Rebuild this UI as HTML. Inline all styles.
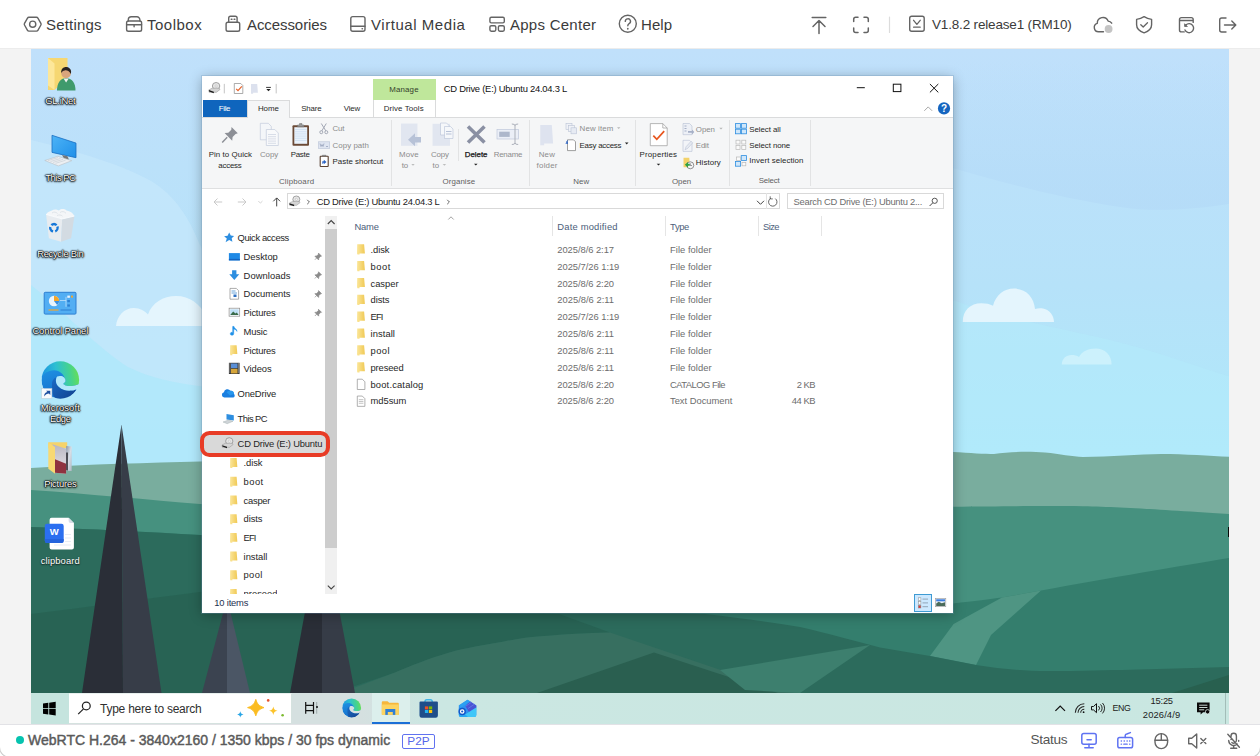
<!DOCTYPE html>
<html lang="en">
<head>
<meta charset="utf-8">
<title>Remote KVM</title>
<style>
*{box-sizing:border-box;margin:0;padding:0}
html,body{width:1260px;height:756px;overflow:hidden;background:#f3f3f3;font-family:"Liberation Sans",sans-serif;}
.abs{position:absolute}
#topbar{position:absolute;left:0;top:0;width:1260px;height:49px;background:#fff;border-bottom:1px solid #ececec;}
#topbar .t{position:absolute;top:15.5px;font-size:15px;line-height:18px;color:#3b3b3b;white-space:nowrap;}
#topbar svg{position:absolute;overflow:visible}
#botbar{position:absolute;left:0;top:724px;width:1260px;height:32px;background:#fff;border-top:1px solid #e2e2e6;}
#botbar>*{margin-top:-724px}
.bt{white-space:nowrap;line-height:18px}
.tk{white-space:nowrap;line-height:14px}
.x{position:absolute;white-space:nowrap}
.dl{position:absolute;left:-30.7px;width:120px;text-align:center;font-size:9.4px;line-height:11.6px;color:#fff;text-shadow:0 0 1.2px #000,0 0 1.2px #000,0 0 1.5px #000,0 0 2px #000,0 1px 2px rgba(0,0,0,.9);white-space:nowrap}
.dl.lt{text-shadow:0 1px 1.5px rgba(0,0,0,.75),0 0 1px rgba(0,0,0,.5)}
.sep{top:120px;width:1px;height:66px;background:#e2e3e4}
.hd{top:216px;width:1px;height:20px;background:#e5e5e5}
#desk{position:absolute;left:31px;top:49px;width:1198px;height:675px;overflow:hidden;background:#b5e2f8;}
#desk>svg.bg{position:absolute;left:0;top:0}
#taskbar{position:absolute;left:0;top:644px;width:1198px;height:31px;background:linear-gradient(90deg,#c5e4de 0,#c5e4de 40px,#d5e0e0 262px,#d5e0e0 330px,#cbe7e2 400px,#c9e7e1 100%);}
#win{position:absolute;left:171px;top:27px;width:751px;height:537px;background:#fff;box-shadow:0 0 0 1px rgba(110,150,185,.28),0 2px 12px rgba(0,0,0,.3);font-size:9px;color:#222;}
</style>
</head>
<body>
<div id="topbar">
<!--TOPBAR-->
<svg width="1260" height="49" viewBox="0 0 1260 49" style="left:0;top:0" fill="none" stroke="#646464" stroke-width="1.4" stroke-linecap="round" stroke-linejoin="round">
<!-- settings -->
<path d="M28.9 17.3 h7.6 a1.6 1.6 0 0 1 1.4 .8 l3 5.3 a1.6 1.6 0 0 1 0 1.6 l-3 5.3 a1.6 1.6 0 0 1 -1.4 .8 h-7.6 a1.6 1.6 0 0 1 -1.4 -.8 l-3 -5.3 a1.6 1.6 0 0 1 0 -1.6 l3 -5.3 a1.6 1.6 0 0 1 1.4 -.8z"/>
<circle cx="32.7" cy="24.2" r="3.1"/>
<!-- toolbox -->
<path d="M128.3 21 v-1.2 a3 3 0 0 1 3 -3 h5.6 a3 3 0 0 1 3 3 v1.200"/>
<rect x="126.600" y="21" width="15" height="10.2" rx="1.800"/>
<path d="M126.600 24.800 h15 M134.100 24.800 v2"/>
<!-- accessories usb -->
<path d="M228.700 22.300 v-4.200 a1.800 1.800 0 0 1 1.800 -1.800 h4.800 a1.800 1.800 0 0 1 1.800 1.800 v4.200"/>
<rect x="226.100" y="22.300" width="13.600" height="8.900" rx="1.800"/>
<path d="M231.300 19.300 h.6 M234.200 19.300 h.6" stroke-width="1.600"/>
<!-- virtual media -->
<rect x="350.800" y="16.600" width="14.200" height="14.600" rx="2"/>
<path d="M350.800 26.300 h14.200"/>
<path d="M362.100 28.800 h.3" stroke-width="1.500"/>
<!-- apps center -->
<rect x="489.900" y="17.300" width="14.400" height="5.600" rx="1.400"/>
<rect x="489.900" y="25.700" width="5.900" height="5.500" rx="1.400"/>
<rect x="498.400" y="25.700" width="5.900" height="5.500" rx="1.400"/>
<!-- help -->
<circle cx="627.800" cy="23.800" r="8.500"/>
<path d="M625.300 21.400 a2.600 2.600 0 1 1 3.800 2.300 c-.9 .5 -1.300 1 -1.300 2.100"/>
<path d="M627.800 28.600 v.2" stroke-width="1.700"/>
<!-- upload -->
<path d="M812.200 17.600 h13.600 M819 33.400 v-12.500 M813 26.500 l6 -6 l6 6" stroke-width="1.500"/>
<!-- fullscreen -->
<path d="M853.700 21.600 v-2.300 a2 2 0 0 1 2 -2 h2.300 M864 17.300 h2.300 a2 2 0 0 1 2 2 v2.300 M868.300 28.100 v2.300 a2 2 0 0 1 -2 2 h-2.300 M858 32.400 h-2.300 a2 2 0 0 1 -2 -2 v-2.300" stroke-width="1.500"/>
<path d="M889.500 17 v15.400" stroke="#dcdcdc" stroke-width="1.200"/>
<!-- version -->
<rect x="909.700" y="16.300" width="14.500" height="14.900" rx="2"/>
<path d="M913.600 20.300 l3.300 4 l3.300 -4 M913.600 27.200 h6.600" stroke-width="1.300"/>
<!-- cloud -->
<path d="M1103.500 31.800 h-5 a4.300 4.300 0 0 1 -1.200 -8.400 a5.600 5.600 0 0 1 10.800 -2.300 a4.500 4.500 0 0 1 3.600 2.100"/>
<circle cx="1108.600" cy="29" r="3.900" fill="#c4c4c4" stroke="none"/>
<!-- shield -->
<path d="M1144.100 16.700 c2.500 1.700 4.800 2.400 7.500 2.700 v5.400 c0 4 -3 6.500 -7.500 8 c-4.500 -1.500 -7.500 -4 -7.500 -8 v-5.400 c2.700 -.3 5 -1 7.500 -2.700z"/>
<path d="M1140.800 24.700 l2.400 2.300 l4.300 -4.300" stroke-width="1.300"/>
<!-- history -->
<path d="M1184.200 31.900 h-2.700 a2 2 0 0 1 -2 -2 v-10.300 a2 2 0 0 1 2 -2 h9.700 a2 2 0 0 1 2 2 v2.800 M1179.500 20.500 h13.700"/>
<path d="M1185.900 25 a4.500 4.500 0 1 1 -.9 5" stroke-width="1.400"/><path d="M1184.600 24.100 v2.400 h2.400z" fill="#666" stroke-width=".8"/>
<!-- exit -->
<path d="M1226 32 h-4.300 a2 2 0 0 1 -2 -2 v-10 a2 2 0 0 1 2 -2 h4.300 M1224.500 25 h11 M1231.800 21 l4 4 l-4 4"/>
</svg>
<div class="t" style="left:46px;letter-spacing:.2px">Settings</div>
<div class="t" style="left:147px;letter-spacing:.5px">Toolbox</div>
<div class="t" style="left:247px;letter-spacing:-.08px">Accessories</div>
<div class="t" style="left:371px;letter-spacing:.55px">Virtual Media</div>
<div class="t" style="left:510px;letter-spacing:.26px">Apps Center</div>
<div class="t" style="left:641px;letter-spacing:.1px">Help</div>
<div class="t" style="left:932px;font-size:13.5px;letter-spacing:-.17px">V1.8.2 release1 (RM10)</div>
<!--/TOPBAR-->
</div>
<div id="desk">
<!--BG-->
<svg class="bg" width="1198" height="676" viewBox="31 49 1198 676">
<defs>
<linearGradient id="sky" x1="0" y1="0" x2="0" y2="1">
<stop offset="0" stop-color="#c0e0fb"/><stop offset="0.55" stop-color="#b6e2f9"/><stop offset="1" stop-color="#ade9fa"/>
</linearGradient>
<linearGradient id="skyd" gradientUnits="userSpaceOnUse" x1="0" y1="60" x2="0" y2="200"><stop offset="0" stop-color="#b3d9f7" stop-opacity="0"/><stop offset="1" stop-color="#b3d9f7" stop-opacity=".6"/></linearGradient>
</defs>
<rect x="31" y="49" width="1198" height="430" fill="url(#sky)"/>
<!-- subtle sky waves -->
<path d="M31 140 C80 152 125 166 151 181 C175 195 190 220 199 243 C230 310 320 350 420 365 L953 380 L953 480 L31 480Z" fill="#c8e9fc" opacity=".62"/>
<path d="M31 285 C60 308 100 350 128 367 C150 378 175 383 199 386 C300 395 400 398 953 400 L953 480 L31 480Z" fill="#afe7fa" opacity=".85"/>
<path d="M953 49 L1229 49 L1229 204 C1190 210 1150 212 1120 207 C1060 198 1000 182 953 168Z" fill="url(#skyd)"/>
<path d="M953 300 C1000 318 1060 328 1110 340 C1160 352 1200 368 1229 376 L1229 480 L953 480Z" fill="#b4ebfb" opacity=".5"/>
<!-- clouds -->
<g fill="#e4f5fd">
<path d="M116 326 C117 316 124 308 134 308 C140 308 145 311 148 314.400 C152 303 163 296 176 296 C190 296 200 304 206 316 L212 326Z"/>
<path d="M962.800 322.100 C962.500 311 970 303.200 981.300 303.200 C986 303.200 990 304 993 305.700 C996 295 1004 288.600 1014 288.600 C1026 288.600 1034 297 1035 309 C1038 308 1041 308 1043 308.600 C1050 310 1054 316 1054 322.100Z"/>
<path d="M1061.800 364.600 C1062 358.500 1066 355 1071.500 355 C1074.500 355 1077 355.600 1079 357 C1082 351.500 1088 348.600 1095.600 348.600 C1105 348.600 1111.600 355 1111.600 364.600Z" fill="#ccf1fc"/>
</g>
<!-- hills -->
<path d="M31 468 C90 464 150 463 200 461.500 C350 456 500 452 650 451 C760 451 860 452 953 452 C970 453 985 454 994 454 C1010 451.500 1030 451.300 1045 452.500 C1060 454 1072 456.500 1083 457 C1110 457 1140 454 1161 454 C1185 454 1210 456 1229 456.700 L1229 725 L31 725Z" fill="#79ad9e"/>
<path d="M31 490 C90 494 150 500 200 504 C400 514 750 512 953 506.700 C1010 506 1050 506 1083 506.200 C1120 507 1150 509 1229 514 L1229 725 L31 725Z" fill="#46917f"/>
<path d="M31 527 C90 529 150 532 200 535 C350 548 500 585 620 606 L870 613 C900 609 930 606 953 603.500 C975 601 990 599 1002 597.500 L1041 590.500 C1110 578 1180 566 1229 558 L1229 725 L31 725Z" fill="#347e6d"/>
<path d="M1002 597.500 L1041 590.500 L991 635 L976 665 L930 656 L953.600 624Z" fill="#4f9583"/>
<path d="M31 527 C90 529 150 532 200 535 C250 540 300 545 345 552 L345 640 L31 640Z" fill="#2c6b5c"/>
<path d="M31 614 C90 607 150 598 200 592 C260 588 300 592 340 600 L705 614 C740 618 770 622 800 627 C830 634 855 641 880 647.500 L930 656 L976 665 C1000 669 1025 671 1047 671 C1080 671 1110 670 1130 669.700 L1229 667 L1229 725 L31 725Z" fill="#2c6b5c"/>
<path d="M31 614 C90 607 150 598 200 592 C260 588 300 592 340 600 L559 614 L610 632.400 C585 633 565 634 544 636 C530 637 515 639 504 641.500 C485 645 465 648 449.500 652.400 C430 658 410 666 395 672.500 L340 691 L31 725Z" fill="#286354"/>
<path d="M340 693 L395 672.500 C410 666 430 658 449.500 652.400 C465 648 485 645 504 641.500 C515 639 530 637 544 636 C565 634 585 633 610 632.400 L723 670.700 L800 693Z" fill="#376f60"/>
<path d="M537 693 L654 652.400 L778 693Z" fill="#2a5f50"/>
<path d="M720 670 L870 645 L800 693 L745 690Z" fill="#3d7f6e"/>
<path d="M1180 690.500 L1229 675 L1229 693 L1172 693Z" fill="#28604f"/>
<!-- trees -->
<path d="M227 598 L202 693 L227 693Z" fill="#3b4350"/><path d="M227 598 L250 693 L227 693Z" fill="#4b5665"/>
<path d="M322 520 L290 693 L322 693Z" fill="#2a2e37"/><path d="M322 520 L355 693 L322 693Z" fill="#363c47"/>
<path d="M121.500 424.500 L82 693 L123 693Z" fill="#2a2e37"/><path d="M121.500 424.500 L161.500 693 L123 693Z" fill="#373d48"/>
</svg>
<!--/BG-->
<!--ICONS-->
<div class="abs" style="left:1196.900px;top:478.100px;width:1.100px;height:9.700px;background:#050807"></div>
<svg class="abs" width="1198" height="675" viewBox="31 49 1198 675" style="left:0;top:0">
<defs>
<linearGradient id="fy" x1="0" y1="0" x2="1" y2="0"><stop offset="0" stop-color="#fde89c"/><stop offset="1" stop-color="#f2cd5e"/></linearGradient>
<linearGradient id="mon" x1="0" y1="0" x2="1" y2="1"><stop offset="0" stop-color="#4db4f7"/><stop offset="1" stop-color="#1f8fe8"/></linearGradient>
<radialGradient id="bin" cx=".5" cy=".4" r=".7"><stop offset="0" stop-color="#ffffff"/><stop offset="1" stop-color="#d6dde3"/></radialGradient>
</defs>
<!-- GL.iNet user folder -->
<path d="M48 58 h19.500 v20 l-13 12 h-6.500z" fill="#f6d772"/>
<path d="M48 58 l6.500 5.500 v26.500 l-6.500 -4.500z" fill="#fde79a"/>
<path d="M57 90.500 c0 -8 3.500 -12 9 -12.500 c6 .5 9.500 4.500 9.500 12.500z" fill="#3f9a6c"/>
<path d="M63.500 78.500 l2.600 4 l2.600 -4z" fill="#f2f2f2"/>
<circle cx="66.100" cy="73.400" r="4.800" fill="#d9a57c"/>
<path d="M61.200 73 c-.5 -5.500 5 -7.500 8.500 -4.500 c1.800 1.500 1.600 4 1 5.500 c-.8 -2.500 -3.500 -4 -6 -3.600 c-1.500 .2 -2.800 1.200 -3.500 2.600z" fill="#2a2320"/>
<!-- This PC -->
<path d="M52 135.300 l24 7.800 v14.600 l-24 -5.300z" fill="url(#mon)" stroke="#1b6fc2" stroke-width=".8"/>
<path d="M62 155 l2 3.500 l5 1.200 l-1.500 -3.400z" fill="#777"/>
<path d="M44.800 160.500 l13 -4.200 l14 4.400 l-13.500 5.200z" fill="#eceff2" stroke="#b9c0c6" stroke-width=".6"/>
<path d="M48 160.600 l10 -3 M50.500 161.500 l10 -3 M53 162.400 l10 -3 M55.500 163.300 l10 -3" stroke="#c5cbd1" stroke-width=".6"/>
<!-- Recycle Bin -->
<path d="M46.100 214.400 L62.200 218.900 L61.100 241.700 L48.900 238.300Z" fill="#e8ecf0"/>
<path d="M62.200 218.900 L74.400 216.100 L71.100 238.300 L61.100 241.700Z" fill="#d3dbe2"/>
<path d="M46.100 214.400 C47 212 49.500 211.500 52 210.500 C54 208.800 57 209.500 59 210.500 C61 208.500 64.500 208.800 66.500 210.500 C70 211 73 213 74.400 216.100 L62.200 218.900Z" fill="#f4f6f8"/>
<path d="M52 213 c2 -1.500 4 -1 5.500 .5 M60 212.500 c2 -1.600 4.500 -1 6 .8 M57 215.500 c2 -1 4 -.6 5.500 .6" fill="none" stroke="#d5dce2" stroke-width=".7"/>
<path d="M46.100 214.400 L62.200 218.900 L74.400 216.100" fill="none" stroke="#fbfcfd" stroke-width=".9"/>
<circle cx="53.900" cy="227.800" r="3.700" fill="none" stroke="#1878d8" stroke-width="2.400" stroke-dasharray="5.600 2.150" transform="rotate(-20 53.900 227.800)"/>
<!-- Control Panel -->
<rect x="44.200" y="292.300" width="31.800" height="21.800" rx="1" fill="#52aef3" stroke="#2c7fd2" stroke-width="1"/>
<circle cx="54" cy="301" r="5.200" fill="#eaf4fd"/><path d="M54 301 v-5.200 a5.200 5.200 0 0 1 5.200 5.200z" fill="#f4a62a"/><path d="M54 301 h5.200 a5.200 5.200 0 0 1 -2 4z" fill="#3b8fe0"/>
<path d="M48.500 310 h10" stroke="#f4a62a" stroke-width="1.200"/><path d="M60.500 310 h11" stroke="#2c7fd2" stroke-width="1"/>
<path d="M60 300.500 h6 M66 296.800 v10" stroke="#bfe0fa" stroke-width=".8"/>
<rect x="67.300" y="295.600" width="2.600" height="2.200" fill="#eaf4fd"/><rect x="67.300" y="300" width="2.600" height="2.200" fill="#2c7fd2"/><rect x="67.300" y="304.400" width="2.600" height="2.200" fill="#2c7fd2"/><rect x="71" y="295.600" width="2" height="2" fill="#f4a62a"/>
<!-- Edge big -->
<defs>
<linearGradient id="eb1" x1="0" y1="0" x2=".3" y2="1"><stop offset="0" stop-color="#2199e8"/><stop offset="1" stop-color="#1670cc"/></linearGradient>
<linearGradient id="eb2" x1="0" y1=".5" x2="1" y2=".4"><stop offset="0" stop-color="#1b90e2"/><stop offset=".4" stop-color="#2dbfd2"/><stop offset=".75" stop-color="#46d38c"/><stop offset="1" stop-color="#6ee04c"/></linearGradient>
<linearGradient id="eb3" x1="0" y1="0" x2="1" y2="1"><stop offset="0" stop-color="#1a6cc6"/><stop offset="1" stop-color="#123f8c"/></linearGradient>
<mask id="edgemask" maskUnits="userSpaceOnUse" x="40" y="360" width="41" height="41"><circle cx="60.300" cy="380" r="18.800" fill="#fff"/><path d="M57.200 376.600 C58.500 375.900 60 375.800 61.300 376.100 C63 376.500 64.200 377.300 64.800 378.400 C65.300 379 65.600 380 65.400 381.300 C65.400 381.800 64.500 382.700 63.300 383.600 C63.300 384.200 64 384.800 65.400 385.400 C68 386.300 73 386.500 76.400 385.100 L80 384 L80 388 L75.900 389.400 C74 390.300 72.500 390.600 70.600 390.600 C68.500 390.700 66 390.500 64.200 390 C62 389.400 60.200 388.300 59 387.100 C57.600 385.800 56.500 384.200 56.100 382.500 C55.800 381.300 55.800 380.100 56.100 379 C56.300 378 56.700 377.200 57.200 376.600Z" fill="#000"/></mask>
<g id="edgelogo" mask="url(#edgemask)">
<circle cx="60.300" cy="380" r="18.800" fill="url(#eb1)"/>
<path d="M55.500 377.200 C53 379 51.800 381.500 52 384.200 C52 387 52 390 52.600 393 C53.200 395.500 54.200 397.300 55.500 398.200 L60 400 L67.100 398.500 C70 397 72.500 395.300 74.100 393 C75.200 391.500 75.800 390.300 75.900 389.400 C74 390.300 72.500 390.600 70.600 390.600 C68.500 390.700 66 390.500 64.200 390 C62 389.400 60.200 388.300 59 387.100 C57.600 385.800 56.500 384.200 56.100 382.500 C55.800 381.300 55.800 380.100 56.100 379Z" fill="url(#eb3)"/>
<path d="M41 378 L41 360 L80 360 L80 384 L76.400 385.100 C73 386.500 68 386.300 65.400 385.400 C64 384.800 63.300 384.200 63.300 383.600 C64.500 382.700 65.400 381.800 65.400 381.300 C65.600 380 65.300 379 64.800 378.400 C64 375 60 370.300 54 370.300 C48 370.300 43.500 374 41 378Z" fill="url(#eb2)"/>
</g>
</defs>
<use href="#edgelogo"/>
<rect x="41.700" y="388.500" width="10.200" height="9.800" fill="#f7fafc" stroke="#c2ccd4" stroke-width=".5"/><path d="M44.200 396.400 c-.2 -2.400 1 -4 3.200 -4.400 l-1.300 -1.300 h4.200 v4.200 l-1.300 -1.300 c-2 .2 -3.600 1 -4.800 2.800z" fill="#1b4fa0"/>
<!-- Pictures folder -->
<defs><linearGradient id="ph1" x1="0" y1="0" x2="0" y2="1"><stop offset="0" stop-color="#b9b7c2"/><stop offset="1" stop-color="#e9e6ea"/></linearGradient>
<linearGradient id="ph2" x1="0" y1="0" x2="1" y2="1"><stop offset="0" stop-color="#8d97a6"/><stop offset=".5" stop-color="#d9dee6"/><stop offset="1" stop-color="#aeb6c2"/></linearGradient></defs>
<path d="M48.300 442.200 h18.900 v6 h-18.900z" fill="#f5d36b"/>
<path d="M66.100 446 L71.700 446.600 L71.700 471 L66.100 470.400Z" fill="url(#ph2)"/>
<path d="M66.100 452.500 h1.700 v18 l-1.700 -.2z" fill="#2b2b32"/>
<path d="M52.500 444.300 L66.100 448.800 L66.100 473.800 L55 472.700Z" fill="url(#ph1)"/>
<path d="M55 459.300 L66.100 463.800 L66.100 473.800 L55 472.700Z" fill="#8f3340"/>
<path d="M48.300 442.400 L55 447.100 L55 473.800 L48.300 468.800Z" fill="#f8d973"/>
<!-- Word doc -->
<path d="M51.600 517.800 h17 l5.300 5.300 v24.400 a2 2 0 0 1 -2 2 h-20.300 a2 2 0 0 1 -2 -2 v-27.700 a2 2 0 0 1 2 -2z" fill="#fff"/>
<path d="M68.600 517.800 v3.300 a2 2 0 0 0 2 2 h3.300z" fill="#d7dde6"/>
<path d="M65 534.500 h6 M65 538 h6 M65 541.500 h6 M54 545 h17" stroke="#e6ecf5" stroke-width="1.200"/>
<rect x="44.800" y="523.800" width="18.900" height="19.100" rx="2.200" fill="#2b6ff0"/><path d="M44.800 539 h18.900 v1.700 a2.200 2.200 0 0 1 -2.200 2.200 h-14.500 a2.200 2.200 0 0 1 -2.200 -2.200z" fill="#2463dc"/>
<text x="54.250" y="535.300" font-family="Liberation Sans, sans-serif" font-size="9.500" font-weight="bold" fill="#fff" text-anchor="middle">W</text>
</svg>
<div class="dl" id="d0" style="top:45.64px;letter-spacing:-0.23px">GL.iNet</div>
<div class="dl" id="d1" style="top:122.54px;letter-spacing:-0.47px">This PC</div>
<div class="dl" id="d2" style="top:198.94px;letter-spacing:-0.29px">Recycle Bin</div>
<div class="dl" id="d3" style="top:275.64px;letter-spacing:-0.08px">Control Panel</div>
<div class="dl" id="d4" style="top:352.64px"><span style="letter-spacing:.14px">Microsoft</span><br><span style="letter-spacing:-.33px">Edge</span></div>
<div class="dl" id="d5" style="top:428.64px;letter-spacing:-0.19px">Pictures</div>
<div class="dl lt" id="d6" style="top:505.94px;letter-spacing:0.10px">clipboard</div>
<!--/ICONS-->
<div id="win">
<!--WIN-->
<div class="abs" style="left:-202px;top:-76px;width:0;height:0">
<!-- title/manage -->
<div class="abs" style="left:373px;top:79px;width:62.800px;height:21px;background:#bfe79b"></div>
<!-- tabs -->
<div class="abs" style="left:203px;top:100px;width:44px;height:17.400px;background:#0f65bd"></div>
<div class="abs" style="left:247.400px;top:100.300px;width:42.400px;height:18px;background:#f5f6f7;border:1px solid #dadbdc;border-bottom:none"></div>
<div class="abs" style="left:373px;top:99.800px;width:62.800px;height:17.600px;border-left:1px solid #dadbdc;border-right:1px solid #dadbdc;background:#fff"></div>
<!-- ribbon -->
<div class="abs" style="left:202px;top:117.400px;width:751px;height:71.400px;background:#f5f6f7;border-top:1px solid #dadbdc;border-bottom:1px solid #dfe0e1"></div>
<div class="abs" style="left:248.400px;top:117px;width:40.400px;height:2px;background:#f5f6f7"></div>
<div class="abs sep" style="left:390.600px"></div><div class="abs sep" style="left:528.800px"></div><div class="abs sep" style="left:635.300px"></div><div class="abs sep" style="left:729.400px"></div><div class="abs sep" style="left:810.200px"></div>
<div class="abs" style="left:458.300px;top:129px;width:1px;height:32px;background:#e2e3e4"></div>
<!-- address bar -->
<div class="abs" style="left:286.700px;top:193.100px;width:493.300px;height:16.400px;border:1px solid #d9d9d9;background:#fff"></div>
<div class="abs" style="left:766.300px;top:193.100px;width:1px;height:16.400px;background:#e3e3e3"></div>
<div class="abs" style="left:786.800px;top:193.100px;width:157.600px;height:16.400px;border:1px solid #d9d9d9;background:#fff"></div>
<!-- nav scrollbar -->
<div class="abs" style="left:325.200px;top:216px;width:12px;height:378px;background:#f0f0f0"></div>
<div class="abs" style="left:325.200px;top:229.300px;width:12px;height:318.600px;background:#cdcdcd"></div>
<!-- header dividers -->
<div class="abs hd" style="left:552px"></div><div class="abs hd" style="left:665.400px"></div><div class="abs hd" style="left:758px"></div><div class="abs hd" style="left:820.800px"></div>
<!-- nav selection -->
<div class="abs" style="left:203px;top:434.600px;width:122px;height:18.700px;background:#d9d9d9"></div>
<div class="abs" style="left:199.800px;top:430.900px;width:130.300px;height:25.800px;border:4.400px solid #e83c26;border-radius:9.500px"></div>
<!-- status bar view buttons -->
<div class="abs" style="left:914.200px;top:594.200px;width:17.600px;height:17.400px;background:#cce8ff;border:1.200px solid #3f9bd3"></div>
<!--WINSVG-->
<svg class="abs" width="751" height="537" viewBox="202 76 751 537" style="left:202px;top:76px;overflow:visible">
<defs>
<linearGradient id="fg" x1="0" y1="0" x2="1" y2="0"><stop offset="0" stop-color="#fbe69a"/><stop offset="1" stop-color="#f0c955"/></linearGradient>
<g id="fold"><path d="M.2 0 h6.900 l.8 9.200 h-5.400 v1.100 h-2.100 l-.4 -1.100z" fill="url(#fg)"/></g>
<g id="pin"><path d="M3.600 0 l3 3 l-1 .3 l-1.700 1.700 l-.2 1.800 l-3.700 -3.700 l1.800 -.2 l1.700 -1.700z M1.800 4.800 l-1.800 1.900" fill="#8a8a8a" stroke="#8a8a8a" stroke-width=".7"/></g>
<g id="cd"><ellipse cx="7.400" cy="3.700" rx="3.700" ry="3.500" fill="#e6e6e6" stroke="#8c8c8c" stroke-width=".8"/><circle cx="7.400" cy="3.700" r="1.100" fill="#fff" stroke="#aaa" stroke-width=".5"/><path d="M0 7.600 l3.500 -1.700 h7 l.8 1.300 l-3.600 2.800 h-7.300z" fill="#d4d4d4" stroke="#8e8e8e" stroke-width=".5"/><path d="M.3 7.800 l4.800 1.600 v1.500 l-4.800 -1.600z" fill="#1c1c1c"/></g>
<g id="dd"><path d="M0 0 h3.400 l-1.700 1.800z" fill="#8c8c8c"/></g>
<g id="ddk"><path d="M0 0 h3.600 l-1.800 1.900z" fill="#222"/></g>
</defs>
<use href="#cd" x="208.700" y="82.300"/>
<path d="M224.300 83.900 v9.500 M276.200 83.900 v9.500" stroke="#b5b5b5" stroke-width=".8"/>
<path d="M234.300 83.500 h6.500 l2 2 v8 h-8.500z" fill="#fff" stroke="#8a8a8a" stroke-width=".7"/><path d="M236.200 88.800 l1.800 1.900 l3.800 -4.300" fill="none" stroke="#e8632a" stroke-width="1.200"/>
<path d="M251 84 h6.200 l.7 8.800 h-4.800 v1 h-2.100z" fill="#d3d9ea" opacity=".8"/>
<path d="M266.100 87.400 h4.800" stroke="#222" stroke-width=".9"/><path d="M266.300 89 h4.400 l-2.200 2.300z" fill="#222"/>
<path d="M856.800 87.700 h8" stroke="#111" stroke-width="1"/>
<rect x="893.300" y="84.200" width="7.600" height="7.400" fill="none" stroke="#111" stroke-width="1"/>
<path d="M929.900 84 l8.400 8.400 M938.300 84 l-8.400 8.400" stroke="#111" stroke-width="1"/>
<path d="M924.300 110.800 l3.900 -3.900 l3.900 3.900" fill="none" stroke="#a8a8a8" stroke-width="1"/>
<circle cx="944" cy="108.400" r="6.100" fill="#1565c0"/><text x="944" y="111.900" font-size="10" font-weight="bold" fill="#fff" text-anchor="middle" font-family="Liberation Sans, sans-serif">?</text>
<g transform="translate(222 127) scale(1)"><path d="M9.500 0 l6.300 6.300 l-2.200 .7 l-3 3 l-.4 3.700 l-7.600 -7.600 l3.700 -.4 l3 -3z" fill="#8c8f96"/><path d="M5.200 10.300 l-5 5.300" stroke="#8c8f96" stroke-width="1.400"/></g>
<g opacity=".55"><path d="M260.300 123.300 h8 l3 3 v13.500 h-11z" fill="#f4f6fb" stroke="#9aa7c4" stroke-width=".7"/><path d="M266.300 129.500 h8.500 l3.500 3.500 v12.500 h-12z" fill="#fbfcff" stroke="#9aa7c4" stroke-width=".7"/><path d="M268 134.500 h8 M268 136.700 h8 M268 138.900 h8 M268 141.100 h8 M268 143.300 h8" stroke="#9aa7c4" stroke-width=".6"/></g>
<rect x="292.500" y="125.200" width="16.500" height="20.600" rx="1" fill="#6b4a36"/><rect x="294.300" y="127.200" width="12.900" height="16.600" fill="#e9f2fb"/><path d="M295 129.500 h11.500 M295 131.700 h11.500 M295 133.900 h11.500 M295 136.100 h11.500 M295 138.300 h11.500 M295 140.500 h11.500" stroke="#c5d8ee" stroke-width=".6"/><path d="M297.500 126.800 v-1.800 h2 v-1.400 h2.500 v1.400 h2 v1.800z" fill="#9a9a9a" stroke="#6d6d6d" stroke-width=".5"/>
<g fill="none" stroke="#a3a8b5" stroke-width="1"><path d="M321.300 123.500 l4.600 7.500 M326.300 123.500 l-4.600 7.500"/><circle cx="321.300" cy="132.200" r="1.500"/><circle cx="326.300" cy="132.200" r="1.500"/></g>
<rect x="318.500" y="141.800" width="11.200" height="6.500" fill="#dfe5f1" stroke="#b8c2d6" stroke-width=".6"/><path d="M320 143.500 l1 3 l1 -2 l1 2 l1 -3 M326 146.500 h2" fill="none" stroke="#8f9bb5" stroke-width=".7"/>
<rect x="320.200" y="156.200" width="8" height="10.300" rx=".6" fill="#fff" stroke="#5a4030" stroke-width="1.100"/><path d="M322.400 156.200 v-1 h3.600 v1z" fill="#999" stroke="#666" stroke-width=".4"/><path d="M322.300 163.800 v-2.500 h1.500 v-1.500 l2.700 2.200 l-2.700 2.200 v-1.400 h-.6 v1z" fill="#2b63c4"/>
<g opacity=".6"><path d="M401 123.500 h16.500 v22.300 h-16.500z" fill="#d5dcec"/><path d="M421 137 v5.500 h-6 v3.800 l-7 -6.500 l7 -6.500 v3.700z" fill="#8fa0c2"/></g>
<g opacity=".6"><path d="M432.500 123.800 h17.500 v22 h-17.500z" fill="#d5dcec"/><path d="M440.500 123 h6 l2.500 2.500 v9.500 h-8.500z" fill="#f6f8fd" stroke="#8fa0c2" stroke-width=".6"/><path d="M444.500 126.500 h6 l2.500 2.500 v9.500 h-8.500z" fill="#f6f8fd" stroke="#8fa0c2" stroke-width=".6"/><path d="M446 131.500 h5.500 M446 134 h5.500" stroke="#8fa0c2" stroke-width="1.200"/></g>
<path d="M468 126.500 l16.500 16 M484.500 126.500 l-16.500 16" stroke="#8a90a3" stroke-width="3.600"/>
<use href="#ddk" x="474" y="163.700"/>
<g opacity=".7"><rect x="497" y="129.500" width="21.500" height="9.500" fill="#e8edf7" stroke="#a9b5cf" stroke-width=".7"/><rect x="499.200" y="131.700" width="10.500" height="5.200" fill="#8f9db9"/><path d="M515 124.500 v19.500 M511.800 124 q3.200 0 3.200 1.500 q0 -1.500 3.200 -1.500 M511.800 144.500 q3.200 0 3.200 -1.500 q0 1.500 3.200 1.500" fill="none" stroke="#8d93a0" stroke-width="1"/></g>
<path d="M540.300 125 h11.500 l1.300 18.500 h-9 v1.800 h-3.800z" fill="#d6dcec" opacity=".75"/>
<g opacity=".6"><rect x="566" y="123.500" width="6" height="6" fill="#eef1f8" stroke="#93a1bf" stroke-width=".6"/><rect x="568.500" y="125.500" width="6" height="6" fill="#eef1f8" stroke="#93a1bf" stroke-width=".6"/><rect x="571" y="127.800" width="5.600" height="6" fill="#dfe5f2" stroke="#93a1bf" stroke-width=".6"/></g>
<use href="#dd" x="617" y="127.200" opacity=".6"/>
<path d="M567.500 139.800 h6 l2 2 v8.800 h-8z" fill="#fff" stroke="#777" stroke-width=".7"/><path d="M565.300 143.500 l2.300 -2.600 l.4 3z" fill="#2b63c4"/><path d="M566.200 142 l1.600 -1.500" stroke="#2b63c4" stroke-width=".9"/>
<use href="#ddk" x="624.900" y="142.600"/>
<path d="M650.300 123.600 h12.500 l4.400 4.400 v17.700 h-16.900z" fill="#fff" stroke="#9a9a9a" stroke-width=".7"/><path d="M662.800 123.600 v4.400 h4.400" fill="none" stroke="#9a9a9a" stroke-width=".7"/><path d="M653.300 135.600 l3.500 3.700 l7.400 -8.200" fill="none" stroke="#e8561e" stroke-width="1.700"/>
<use href="#ddk" x="656.700" y="163.700"/>
<g opacity=".65"><path d="M683 123.500 h6.500 l2.500 2.500 v8.700 h-9z" fill="#e9edf6" stroke="#93a1bf" stroke-width=".6"/><path d="M684.500 126 h2 M684.500 128.500 h2 M684.500 131 h2" stroke="#7d8cae" stroke-width="1.100"/><path d="M688 131 h4 v-1.600 l2.300 2.500 l-2.300 2.500 v-1.600 h-4z" fill="#7d8cae"/></g>
<use href="#dd" x="719.300" y="127.800" opacity=".6"/>
<g opacity=".65"><path d="M683 140.300 h6.500 l2.500 2.500 v8.600 h-9z" fill="#f1f3f9" stroke="#93a1bf" stroke-width=".6"/><path d="M685 149.800 l1 -3 l5 -5.500 l1.700 1.500 l-5 5.600z" fill="#dfe4ef" stroke="#93a1bf" stroke-width=".5"/></g>
<path d="M683.500 157.800 h5.800 l.6 9.400 h-6.400z" fill="#f3d26a"/><circle cx="690.300" cy="165.300" r="3.500" fill="#f5f5f5" stroke="#777" stroke-width=".8"/><path d="M690.300 163.300 v2.200 h1.700" fill="none" stroke="#555" stroke-width=".6"/><path d="M684.800 164.800 l3.200 -2.700 v1.700 h1.800 v2 h-1.800 v1.700z" fill="#2ea043"/>
<g stroke="#2d8ee0" stroke-width=".8" fill="#cfe7fb"><rect x="735.400" y="123.600" width="5" height="4.600"/><rect x="741.400" y="123.600" width="5" height="4.600"/><rect x="735.400" y="129.200" width="5" height="4.600"/><rect x="741.400" y="129.200" width="5" height="4.600"/></g>
<g stroke="#b9b9b9" stroke-width=".7" fill="#fafafa"><rect x="736" y="140.200" width="4" height="3.800"/><rect x="741.800" y="140.200" width="4" height="3.800"/><rect x="736" y="145.600" width="4" height="3.800"/><rect x="741.800" y="145.600" width="4" height="3.800"/></g>
<g stroke-width=".8"><rect x="741.200" y="155.600" width="5.200" height="4.800" fill="#cfe7fb" stroke="#2d8ee0"/><rect x="735.400" y="161.400" width="5.200" height="4.800" fill="#cfe7fb" stroke="#2d8ee0"/><rect x="736.600" y="157" width="3.800" height="3.400" fill="#fafafa" stroke="#b9b9b9" stroke-width=".7"/><rect x="742" y="162.400" width="3.800" height="3.400" fill="#fafafa" stroke="#b9b9b9" stroke-width=".7"/></g>
<use href="#dd" x="411.300" y="164" opacity=".55"/><use href="#dd" x="442.700" y="164" opacity=".55"/>
<g fill="none" stroke="#c9c9c9" stroke-width="1"><path d="M222.200 202 h-8.200 M217.500 198.500 l-3.500 3.500 l3.500 3.500"/><path d="M237.800 202 h8.200 M242.500 198.500 l3.500 3.500 l-3.500 3.500"/><path d="M258.300 201 l2.100 2.100 l2.100 -2.100" stroke-width=".8"/></g>
<path d="M276.700 206.400 v-8.400 M273.300 201.300 l3.400 -3.400 l3.400 3.400" fill="none" stroke="#444" stroke-width="1"/>
<use href="#cd" x="289.300" y="195.800" transform="translate(289.300 195.800) scale(.95) translate(-289.300 -195.800)"/>
<path d="M307.200 199.800 l2.200 2.200 l-2.200 2.200 M447.200 199.800 l2.200 2.200 l-2.200 2.200" fill="none" stroke="#555" stroke-width=".9"/>
<path d="M757 200.800 l3.500 3.500 l3.500 -3.500" fill="none" stroke="#444" stroke-width="1"/>
<path d="M775.300 198.600 a4.200 4.200 0 1 1 -4.400 -.4" fill="none" stroke="#555" stroke-width=".9"/><path d="M770.200 196.300 v2.600 h2.600" fill="none" stroke="#555" stroke-width=".8"/>
<circle cx="934.700" cy="200.800" r="2.600" fill="none" stroke="#444" stroke-width=".9"/><path d="M932.800 202.800 l-3.200 3.200" stroke="#444" stroke-width="1"/>
<path d="M448.300 219.500 l2.700 -2.700 l2.700 2.700" fill="none" stroke="#8a8a8a" stroke-width=".8"/>
<path d="M327.800 224 l3.400 -3.400 l3.400 3.400 M327.800 585.600 l3.400 3.400 l3.400 -3.400" fill="none" stroke="#444" stroke-width="1.100"/>
<path d="M229.200 232.600 l1.600 3 l3.300 .4 l-2.400 2.300 l.7 3.400 l-3.200 -1.700 l-3.600 2.200 l1.200 -3.700 l-2.700 -2.300 l3.500 -.5z" fill="#2d8ee0"/>
<rect x="228.900" y="253.100" width="11" height="7.300" fill="#1f8ae6"/><rect x="228.900" y="258.900" width="11" height="1.500" fill="#1565c0"/>
<path d="M232.100 270.300 h4.300 v4 h2.900 l-5 5.600 l-5 -5.600 h2.800z" fill="#2d8ee0"/>
<path d="M230 288.400 h6.300 l2.300 2.300 v8.500 h-8.600z" fill="#fff" stroke="#8a8a8a" stroke-width=".7"/><path d="M231.500 291 h4 M231.500 293 h5.500" stroke="#5b9bd5" stroke-width=".9"/><rect x="233.500" y="294.500" width="3" height="2.500" fill="#2d6fc0"/>
<rect x="229.100" y="308.200" width="10.600" height="8" fill="#fff" stroke="#8a8a8a" stroke-width=".7"/><rect x="230.200" y="309.300" width="8.400" height="5.800" fill="#bfe0f7"/><path d="M230.200 315.100 l3 -3.600 l2.200 2 l1.400 -1 l1.800 2.600z" fill="#3a6b4a"/>
<path d="M233.700 326.400 v7.400 a1.700 1.500 0 1 1 -1 -1.400 v-6z M233.700 326.400 c.5 2 3.300 2.200 3.300 5 c-.5 -1.800 -2.400 -2 -3.300 -2.500z" fill="#1e90e8" stroke="#1e90e8" stroke-width=".5"/>
<use href="#fold" x="230" y="345.200" transform="translate(230 345.200) scale(.93 .97) translate(-230 -345.200)"/>
<rect x="228.900" y="362.800" width="10.700" height="11.200" fill="#3a3a3a"/><rect x="231" y="363.500" width="6.500" height="4.600" fill="#5b8fd6"/><rect x="231" y="368.800" width="6.500" height="4.600" fill="#d6a53a"/><path d="M229.900 363.500 v10 M238.600 363.500 v10" stroke="#ddd" stroke-width=".8" stroke-dasharray="1 1"/>
<path d="M224.300 397.600 a2.700 2.700 0 0 1 -.4 -5.300 a3.600 3.600 0 0 1 6.500 -1.500 a3 3 0 0 1 3.600 3.300 a2 2 0 0 1 -1 3.500z" fill="#1a7fe0"/><path d="M226.500 392.300 a3.600 3.600 0 0 1 3.900 -1.500 a3 3 0 0 1 3.600 3.300 l-4 1.500z" fill="#2a9cf0" opacity=".8"/>
<path d="M226.500 414 l7.300 1.300 v5.300 l-7.300 -1.200z" fill="#2d8ee0"/><path d="M223 422 l5.500 -2 l4.500 1.300 l-5.800 2.400z" fill="#cfd4d8" stroke="#9aa" stroke-width=".4"/>
<use href="#cd" x="222" y="437.500" transform="translate(222 437.500) scale(.98) translate(-222 -437.500)"/>
<use href="#pin" x="314.900" y="253.1"/>
<use href="#pin" x="314.900" y="271.8"/>
<use href="#pin" x="314.900" y="290.6"/>
<use href="#pin" x="314.900" y="309.3"/>
<use href="#fold" x="230" y="458.00" transform="translate(230 458.00) scale(.93 .97) translate(-230 -458.00)"/>
<use href="#fold" x="230" y="476.72" transform="translate(230 476.72) scale(.93 .97) translate(-230 -476.72)"/>
<use href="#fold" x="230" y="495.44" transform="translate(230 495.44) scale(.93 .97) translate(-230 -495.44)"/>
<use href="#fold" x="230" y="514.16" transform="translate(230 514.16) scale(.93 .97) translate(-230 -514.16)"/>
<use href="#fold" x="230" y="532.88" transform="translate(230 532.88) scale(.93 .97) translate(-230 -532.88)"/>
<use href="#fold" x="230" y="551.60" transform="translate(230 551.60) scale(.93 .97) translate(-230 -551.60)"/>
<use href="#fold" x="230" y="570.32" transform="translate(230 570.32) scale(.93 .97) translate(-230 -570.32)"/>
<path d="M230.200 589.040 h6.400 l.3 4.900 h-6.900z" fill="url(#fg)"/>
<use href="#fold" x="357" y="244.20"/>
<use href="#fold" x="357" y="261.05"/>
<use href="#fold" x="357" y="277.90"/>
<use href="#fold" x="357" y="294.75"/>
<use href="#fold" x="357" y="311.60"/>
<use href="#fold" x="357" y="328.45"/>
<use href="#fold" x="357" y="345.30"/>
<use href="#fold" x="357" y="362.15"/>
<path d="M357.300 379.20 h5 l2.600 2.600 v7.700 h-7.600z" fill="#fff" stroke="#8f8f8f" stroke-width=".7"/>
<path d="M357.300 396.05 h5 l2.600 2.600 v7.700 h-7.600z" fill="#fff" stroke="#8f8f8f" stroke-width=".7"/>
<path d="M358.800 399.65 h4.600 M358.800 401.45 h4.600 M358.800 403.25 h4.600" stroke="#9a9a9a" stroke-width=".6"/>
<g><rect x="918.300" y="597.800" width="2.600" height="2.600" fill="#fff" stroke="#888" stroke-width=".5"/><rect x="918.300" y="601.600" width="2.600" height="2.600" fill="#fff" stroke="#888" stroke-width=".5"/><rect x="918.300" y="605.400" width="2.600" height="2.600" fill="#e03a3a" stroke="#888" stroke-width=".5"/><path d="M922.500 599.100 h5.500 M922.500 602.900 h5.500 M922.500 606.700 h5.500" stroke="#7a8a9a" stroke-width=".7"/></g>
<rect x="935.400" y="598.500" width="10.400" height="8.200" fill="#e8eef5" stroke="#9a9a9a" stroke-width=".6"/><rect x="936.200" y="599.300" width="8.800" height="2" fill="#3b7de0"/><path d="M936.200 606 v-2.500 l2.500 -1.800 l3 1.500 l3.300 -1 v3.800z" fill="#4a6b5a"/>
</svg>
<!--/WINSVG-->
<!--WINTEXT-->
<div class="x" id="t0" style="top:82.74px;font-size:9.4px;line-height:12.4px;color:#111;letter-spacing:-0.232px;left:443.70px;">CD Drive (E:) Ubuntu 24.04.3 L</div>
<div class="x" id="t1" style="top:84.81px;font-size:7.9px;line-height:10.9px;color:#33402b;letter-spacing:0.164px;left:389.20px;">Manage</div>
<div class="x" id="t2" style="top:104.31px;font-size:7.9px;line-height:10.9px;color:#fff;letter-spacing:-0.305px;left:218.70px;">File</div>
<div class="x" id="t3" style="top:104.31px;font-size:7.9px;line-height:10.9px;color:#2a2a2a;letter-spacing:-0.012px;left:257.90px;">Home</div>
<div class="x" id="t4" style="top:104.31px;font-size:7.9px;line-height:10.9px;color:#2a2a2a;letter-spacing:-0.192px;left:301.30px;">Share</div>
<div class="x" id="t5" style="top:104.31px;font-size:7.9px;line-height:10.9px;color:#2a2a2a;letter-spacing:-0.166px;left:343.70px;">View</div>
<div class="x" id="t6" style="top:104.11px;font-size:7.9px;line-height:10.9px;color:#2a2a2a;letter-spacing:0.101px;left:383.70px;">Drive Tools</div>
<div class="x" id="t7" style="top:150.41px;font-size:7.9px;line-height:10.9px;color:#262626;letter-spacing:0.063px;left:208.70px;">Pin to Quick</div>
<div class="x" id="t8" style="top:160.71px;font-size:7.9px;line-height:10.9px;color:#262626;letter-spacing:-0.212px;left:218.30px;">access</div>
<div class="x" id="t9" style="top:150.41px;font-size:7.9px;line-height:10.9px;color:#8c8c8c;letter-spacing:-0.082px;left:260.00px;">Copy</div>
<div class="x" id="t10" style="top:150.41px;font-size:7.9px;line-height:10.9px;color:#262626;letter-spacing:-0.296px;left:290.80px;">Paste</div>
<div class="x" id="t11" style="top:124.21px;font-size:7.9px;line-height:10.9px;color:#8c8c8c;letter-spacing:-0.230px;left:332.50px;">Cut</div>
<div class="x" id="t12" style="top:140.51px;font-size:7.9px;line-height:10.9px;color:#8c8c8c;letter-spacing:0.059px;left:332.50px;">Copy path</div>
<div class="x" id="t13" style="top:156.71px;font-size:7.9px;line-height:10.9px;color:#262626;letter-spacing:0.025px;left:332.50px;">Paste shortcut</div>
<div class="x" id="t14" style="top:176.51px;font-size:7.9px;line-height:10.9px;color:#5f5f5f;letter-spacing:0.179px;left:278.90px;">Clipboard</div>
<div class="x" id="t15" style="top:150.41px;font-size:7.9px;line-height:10.9px;color:#8c8c8c;letter-spacing:0.100px;left:399.00px;">Move</div>
<div class="x" id="t16" style="top:160.71px;font-size:7.9px;line-height:10.9px;color:#8c8c8c;letter-spacing:-0.145px;left:401.70px;">to</div>
<div class="x" id="t17" style="top:150.41px;font-size:7.9px;line-height:10.9px;color:#8c8c8c;letter-spacing:-0.158px;left:431.00px;">Copy</div>
<div class="x" id="t18" style="top:160.71px;font-size:7.9px;line-height:10.9px;color:#8c8c8c;letter-spacing:-0.092px;left:432.60px;">to</div>
<div class="x" id="t19" style="top:150.41px;font-size:7.9px;line-height:10.9px;color:#111;letter-spacing:-0.037px;left:464.80px;-webkit-text-stroke:.25px #111;">Delete</div>
<div class="x" id="t20" style="top:150.41px;font-size:7.9px;line-height:10.9px;color:#8c8c8c;letter-spacing:-0.207px;left:493.70px;">Rename</div>
<div class="x" id="t21" style="top:176.51px;font-size:7.9px;line-height:10.9px;color:#5f5f5f;letter-spacing:0.084px;left:442.50px;">Organise</div>
<div class="x" id="t22" style="top:150.41px;font-size:7.9px;line-height:10.9px;color:#8c8c8c;letter-spacing:0.234px;left:538.70px;">New</div>
<div class="x" id="t23" style="top:160.71px;font-size:7.9px;line-height:10.9px;color:#8c8c8c;letter-spacing:0.226px;left:536.60px;">folder</div>
<div class="x" id="t24" style="top:124.21px;font-size:7.9px;line-height:10.9px;color:#8c8c8c;letter-spacing:0.114px;left:579.60px;">New item</div>
<div class="x" id="t25" style="top:140.51px;font-size:7.9px;line-height:10.9px;color:#262626;letter-spacing:-0.236px;left:579.60px;">Easy access</div>
<div class="x" id="t26" style="top:176.51px;font-size:7.9px;line-height:10.9px;color:#5f5f5f;letter-spacing:0.002px;left:573.30px;">New</div>
<div class="x" id="t27" style="top:150.41px;font-size:7.9px;line-height:10.9px;color:#262626;letter-spacing:0.164px;left:639.60px;">Properties</div>
<div class="x" id="t28" style="top:124.71px;font-size:7.9px;line-height:10.9px;color:#8c8c8c;letter-spacing:-0.029px;left:695.80px;">Open</div>
<div class="x" id="t29" style="top:141.21px;font-size:7.9px;line-height:10.9px;color:#8c8c8c;letter-spacing:-0.175px;left:695.80px;">Edit</div>
<div class="x" id="t30" style="top:158.11px;font-size:7.9px;line-height:10.9px;color:#262626;letter-spacing:0.078px;left:695.80px;">History</div>
<div class="x" id="t31" style="top:176.51px;font-size:7.9px;line-height:10.9px;color:#5f5f5f;letter-spacing:-0.029px;left:672.00px;">Open</div>
<div class="x" id="t32" style="top:124.51px;font-size:7.9px;line-height:10.9px;color:#262626;letter-spacing:-0.062px;left:749.30px;">Select all</div>
<div class="x" id="t33" style="top:140.51px;font-size:7.9px;line-height:10.9px;color:#262626;letter-spacing:-0.071px;left:749.30px;">Select none</div>
<div class="x" id="t34" style="top:156.41px;font-size:7.9px;line-height:10.9px;color:#262626;letter-spacing:0.070px;left:749.30px;">Invert selection</div>
<div class="x" id="t35" style="top:176.31px;font-size:7.9px;line-height:10.9px;color:#5f5f5f;letter-spacing:-0.222px;left:758.80px;">Select</div>
<div class="x" id="t36" style="top:196.14px;font-size:9.4px;line-height:12.4px;color:#1a1a1a;letter-spacing:-0.246px;left:316.70px;">CD Drive (E:) Ubuntu 24.04.3 L</div>
<div class="x" id="t37" style="top:196.14px;font-size:9.4px;line-height:12.4px;color:#6e6e6e;letter-spacing:-0.250px;left:793.50px;">Search CD Drive (E:) Ubuntu 2...</div>
<div class="x" id="t38" style="top:220.84px;font-size:9.4px;line-height:12.4px;color:#4c607a;letter-spacing:-0.129px;left:354.40px;">Name</div>
<div class="x" id="t39" style="top:220.84px;font-size:9.4px;line-height:12.4px;color:#4c607a;letter-spacing:0.197px;left:557.30px;">Date modified</div>
<div class="x" id="t40" style="top:220.84px;font-size:9.4px;line-height:12.4px;color:#4c607a;letter-spacing:-0.332px;left:670.00px;">Type</div>
<div class="x" id="t41" style="top:220.84px;font-size:9.4px;line-height:12.4px;color:#4c607a;letter-spacing:-0.562px;left:763.00px;">Size</div>
<div class="x" id="t42" style="top:243.84px;font-size:9.4px;line-height:12.4px;color:#262626;letter-spacing:-0.077px;left:370.50px;">.disk</div>
<div class="x" id="t43" style="top:243.84px;font-size:9.4px;line-height:12.4px;color:#6d6d6d;letter-spacing:-0.050px;left:557.30px;">2025/8/6 2:17</div>
<div class="x" id="t44" style="top:243.84px;font-size:9.4px;line-height:12.4px;color:#6d6d6d;letter-spacing:0.048px;left:670.00px;">File folder</div>
<div class="x" id="t45" style="top:260.69px;font-size:9.4px;line-height:12.4px;color:#262626;letter-spacing:0.535px;left:370.50px;">boot</div>
<div class="x" id="t46" style="top:260.69px;font-size:9.4px;line-height:12.4px;color:#6d6d6d;letter-spacing:-0.040px;left:557.30px;">2025/7/26 1:19</div>
<div class="x" id="t47" style="top:260.69px;font-size:9.4px;line-height:12.4px;color:#6d6d6d;letter-spacing:0.048px;left:670.00px;">File folder</div>
<div class="x" id="t48" style="top:277.54px;font-size:9.4px;line-height:12.4px;color:#262626;letter-spacing:-0.026px;left:370.50px;">casper</div>
<div class="x" id="t49" style="top:277.54px;font-size:9.4px;line-height:12.4px;color:#6d6d6d;letter-spacing:-0.050px;left:557.30px;">2025/8/6 2:20</div>
<div class="x" id="t50" style="top:277.54px;font-size:9.4px;line-height:12.4px;color:#6d6d6d;letter-spacing:0.048px;left:670.00px;">File folder</div>
<div class="x" id="t51" style="top:294.39px;font-size:9.4px;line-height:12.4px;color:#262626;letter-spacing:-0.056px;left:370.50px;">dists</div>
<div class="x" id="t52" style="top:294.39px;font-size:9.4px;line-height:12.4px;color:#6d6d6d;letter-spacing:0.004px;left:557.30px;">2025/8/6 2:11</div>
<div class="x" id="t53" style="top:294.39px;font-size:9.4px;line-height:12.4px;color:#6d6d6d;letter-spacing:0.048px;left:670.00px;">File folder</div>
<div class="x" id="t54" style="top:311.24px;font-size:9.4px;line-height:12.4px;color:#262626;letter-spacing:-0.865px;left:370.50px;">EFI</div>
<div class="x" id="t55" style="top:311.24px;font-size:9.4px;line-height:12.4px;color:#6d6d6d;letter-spacing:-0.040px;left:557.30px;">2025/7/26 1:19</div>
<div class="x" id="t56" style="top:311.24px;font-size:9.4px;line-height:12.4px;color:#6d6d6d;letter-spacing:0.048px;left:670.00px;">File folder</div>
<div class="x" id="t57" style="top:328.09px;font-size:9.4px;line-height:12.4px;color:#262626;letter-spacing:0.074px;left:370.50px;">install</div>
<div class="x" id="t58" style="top:328.09px;font-size:9.4px;line-height:12.4px;color:#6d6d6d;letter-spacing:0.004px;left:557.30px;">2025/8/6 2:11</div>
<div class="x" id="t59" style="top:328.09px;font-size:9.4px;line-height:12.4px;color:#6d6d6d;letter-spacing:0.048px;left:670.00px;">File folder</div>
<div class="x" id="t60" style="top:344.94px;font-size:9.4px;line-height:12.4px;color:#262626;letter-spacing:0.441px;left:370.50px;">pool</div>
<div class="x" id="t61" style="top:344.94px;font-size:9.4px;line-height:12.4px;color:#6d6d6d;letter-spacing:0.004px;left:557.30px;">2025/8/6 2:11</div>
<div class="x" id="t62" style="top:344.94px;font-size:9.4px;line-height:12.4px;color:#6d6d6d;letter-spacing:0.048px;left:670.00px;">File folder</div>
<div class="x" id="t63" style="top:361.79px;font-size:9.4px;line-height:12.4px;color:#262626;letter-spacing:-0.127px;left:370.50px;">preseed</div>
<div class="x" id="t64" style="top:361.79px;font-size:9.4px;line-height:12.4px;color:#6d6d6d;letter-spacing:0.004px;left:557.30px;">2025/8/6 2:11</div>
<div class="x" id="t65" style="top:361.79px;font-size:9.4px;line-height:12.4px;color:#6d6d6d;letter-spacing:0.048px;left:670.00px;">File folder</div>
<div class="x" id="t66" style="top:378.64px;font-size:9.4px;line-height:12.4px;color:#262626;letter-spacing:0.159px;left:370.50px;">boot.catalog</div>
<div class="x" id="t67" style="top:378.64px;font-size:9.4px;line-height:12.4px;color:#6d6d6d;letter-spacing:-0.050px;left:557.30px;">2025/8/6 2:20</div>
<div class="x" id="t68" style="top:378.64px;font-size:9.4px;line-height:12.4px;color:#6d6d6d;letter-spacing:-0.510px;left:670.00px;">CATALOG File</div>
<div class="x" id="t69" style="top:378.64px;font-size:9.4px;line-height:12.4px;color:#6d6d6d;letter-spacing:-0.506px;left:796.70px;">2 KB</div>
<div class="x" id="t70" style="top:395.49px;font-size:9.4px;line-height:12.4px;color:#262626;letter-spacing:-0.025px;left:370.50px;">md5sum</div>
<div class="x" id="t71" style="top:395.49px;font-size:9.4px;line-height:12.4px;color:#6d6d6d;letter-spacing:-0.050px;left:557.30px;">2025/8/6 2:20</div>
<div class="x" id="t72" style="top:395.49px;font-size:9.4px;line-height:12.4px;color:#6d6d6d;letter-spacing:-0.018px;left:670.00px;">Text Document</div>
<div class="x" id="t73" style="top:395.49px;font-size:9.4px;line-height:12.4px;color:#6d6d6d;letter-spacing:-0.448px;left:791.70px;">44 KB</div>
<div class="x" id="t74" style="top:232.44px;font-size:9.4px;line-height:12.4px;color:#262626;letter-spacing:-0.371px;left:237.60px;">Quick access</div>
<div class="x" id="t75" style="top:251.04px;font-size:9.4px;line-height:12.4px;color:#262626;letter-spacing:-0.029px;left:243.60px;">Desktop</div>
<div class="x" id="t76" style="top:269.74px;font-size:9.4px;line-height:12.4px;color:#262626;letter-spacing:0.068px;left:243.60px;">Downloads</div>
<div class="x" id="t77" style="top:288.44px;font-size:9.4px;line-height:12.4px;color:#262626;letter-spacing:-0.069px;left:243.60px;">Documents</div>
<div class="x" id="t78" style="top:307.24px;font-size:9.4px;line-height:12.4px;color:#262626;letter-spacing:-0.259px;left:243.60px;">Pictures</div>
<div class="x" id="t79" style="top:325.94px;font-size:9.4px;line-height:12.4px;color:#262626;letter-spacing:-0.179px;left:243.60px;">Music</div>
<div class="x" id="t80" style="top:344.64px;font-size:9.4px;line-height:12.4px;color:#262626;letter-spacing:-0.259px;left:243.60px;">Pictures</div>
<div class="x" id="t81" style="top:363.34px;font-size:9.4px;line-height:12.4px;color:#262626;letter-spacing:-0.101px;left:243.60px;">Videos</div>
<div class="x" id="t82" style="top:388.44px;font-size:9.4px;line-height:12.4px;color:#262626;letter-spacing:-0.150px;left:237.60px;">OneDrive</div>
<div class="x" id="t83" style="top:413.24px;font-size:9.4px;line-height:12.4px;color:#262626;letter-spacing:-0.564px;left:237.60px;">This PC</div>
<div class="x" id="t84" style="top:438.04px;font-size:9.4px;line-height:12.4px;color:#262626;letter-spacing:-0.199px;left:237.60px;">CD Drive (E:) Ubuntu</div>
<div class="x" id="t85" style="top:457.04px;font-size:9.4px;line-height:12.4px;color:#262626;letter-spacing:-0.095px;left:243.60px;">.disk</div>
<div class="x" id="t86" style="top:475.74px;font-size:9.4px;line-height:12.4px;color:#262626;letter-spacing:0.438px;left:243.60px;">boot</div>
<div class="x" id="t87" style="top:494.54px;font-size:9.4px;line-height:12.4px;color:#262626;letter-spacing:-0.259px;left:243.60px;">casper</div>
<div class="x" id="t88" style="top:513.24px;font-size:9.4px;line-height:12.4px;color:#262626;letter-spacing:-0.095px;left:243.60px;">dists</div>
<div class="x" id="t89" style="top:532.04px;font-size:9.4px;line-height:12.4px;color:#262626;letter-spacing:-0.930px;left:243.60px;">EFI</div>
<div class="x" id="t90" style="top:550.74px;font-size:9.4px;line-height:12.4px;color:#262626;letter-spacing:-0.026px;left:243.60px;">install</div>
<div class="x" id="t91" style="top:569.44px;font-size:9.4px;line-height:12.4px;color:#262626;letter-spacing:0.316px;left:243.60px;">pool</div>
<div class="x" style="left:243.6px;top:587.9px;height:6.2px;overflow:hidden;font-size:9.4px;line-height:12.4px;color:#1e1e1e">preseed</div>
<div class="x" id="t92" style="top:597.44px;font-size:9.4px;line-height:12.4px;color:#1e2f50;letter-spacing:-0.168px;left:214.20px;">10 items</div>
<!--/WINTEXT-->
</div>
<!--/WIN-->
</div>
<div id="taskbar">
<!--TASKBAR-->
<div class="abs" style="left:38px;top:0;width:223px;height:31px;background:#fff;border:1px solid #d5e2df;border-left:none;border-top-color:#e8f0ee"></div>
<div class="abs" style="left:341px;top:0;width:37.500px;height:31px;background:#dcefec;border-bottom:2.200px solid #1b6fd6"></div>
<div class="abs" style="left:1194.200px;top:0;width:1px;height:31px;background:#a3bdb8"></div>
<div class="abs tk" id="tks" style="left:69px;top:9.200px;font-size:12px;color:#2f2f2f;letter-spacing:-.24px">Type here to search</div>
<div class="abs tk" id="tke" style="left:1081.500px;top:8.400px;font-size:8.800px;letter-spacing:-.4px;color:#1c1c1c">ENG</div>
<div class="abs tk" id="tkt" style="left:1119.600px;top:1.100px;font-size:9.400px;letter-spacing:-.25px;color:#1c1c1c">15:25</div>
<div class="abs tk" id="tkd" style="left:1111.800px;top:15.300px;font-size:9.400px;letter-spacing:.12px;color:#1c1c1c">2026/4/9</div>
<svg class="abs" width="1198" height="31" viewBox="31 693 1198 31" style="left:0;top:0;overflow:visible">
<!-- start -->
<path d="M43 703.600 l5.300 -.8 v5.400 h-5.300z M49.200 702.700 l6.500 -1 v6.500 h-6.500z M43 709.100 h5.300 v5.400 l-5.300 -.8z M49.200 709.100 h6.500 v6.500 l-6.500 -1z" fill="#000"/>
<!-- search icon -->
<g fill="none" stroke="#222" stroke-width="1.250"><circle cx="86.300" cy="705.900" r="3.900"/><path d="M83.500 708.900 l-5.300 5.200"/></g>
<!-- sparkles -->
<path d="M255.800 699.400 c1.500 4.800 3.400 6.700 8.200 8.200 c-4.800 1.500 -6.700 3.400 -8.200 8.200 c-1.500 -4.800 -3.400 -6.700 -8.200 -8.200 c4.800 -1.500 6.700 -3.400 8.200 -8.200z" fill="#fbbc21" stroke="#fbbc21" stroke-width="1" stroke-linejoin="round"/>
<path d="M273.300 706.500 c.6 2.800 1.400 3.600 4.200 4.200 c-2.800 .6 -3.600 1.400 -4.200 4.200 c-.6 -2.800 -1.400 -3.600 -4.200 -4.200 c2.800 -.6 3.600 -1.400 4.200 -4.200z" fill="#fcc32a"/>
<path d="M240.300 711.200 c.5 2.200 1 2.700 3.200 3.200 c-2.200 .5 -2.700 1 -3.200 3.200 c-.5 -2.200 -1 -2.700 -3.200 -3.200 c2.200 -.5 2.700 -1 3.200 -3.200z" fill="#2aa6e6"/>
<circle cx="268.200" cy="700.400" r="1.300" fill="#e6532e"/><circle cx="282.600" cy="715.200" r="1.300" fill="#7cba2f"/>
<!-- task view -->
<g fill="none" stroke="#111" stroke-width="1.200"><path d="M305.700 702 v11.700 M313.500 702 v11.700 M305.700 705.300 h7.800 M305.700 710.600 h7.800"/></g><path d="M316.700 702 v11.700" stroke="#8f9a9a" stroke-width=".8"/><circle cx="317" cy="707" r="1" fill="#111"/>
<!-- edge -->
<use href="#edgelogo" transform="translate(351.600 708) scale(.505) translate(-60.300 -380)"/>
<!-- explorer -->
<path d="M381.800 702.200 a1 1 0 0 1 1 -1 h4.800 l1.600 1.600 h8.600 a1 1 0 0 1 1 1 v10.400 a.7 .7 0 0 1 -.7 .7 h-15.600 a.7 .7 0 0 1 -.7 -.7z" fill="#f6b73c"/>
<path d="M381.800 704.600 h17 v9.600 a.7 .7 0 0 1 -.7 .7 h-15.600 a.7 .7 0 0 1 -.7 -.7z" fill="#fcd462"/>
<path d="M385.300 709 h10 v5.900 h-10z" fill="#2f7fd6"/><path d="M387.800 712 h5 v2.900 h-5z" fill="#fcd462"/>
<!-- store -->
<path d="M425 703 v-1.500 a1.800 1.800 0 0 1 1.800 -1.800 h3.600 a1.800 1.800 0 0 1 1.800 1.800 v1.500" fill="none" stroke="#3cb2e6" stroke-width="1.400"/>
<path d="M419.500 702.600 a1 1 0 0 1 1 -1 h16.400 a1 1 0 0 1 1 1 v13 a2.200 2.200 0 0 1 -2.200 2.200 h-14 a2.200 2.200 0 0 1 -2.200 -2.200z" fill="#1f4e8a"/>
<rect x="424.900" y="706.400" width="3.300" height="3" fill="#f25022"/><rect x="428.900" y="706.400" width="3.300" height="3" fill="#7fba00"/><rect x="424.900" y="710" width="3.300" height="3" fill="#21b4f2"/><rect x="428.900" y="710" width="3.300" height="3" fill="#ffc20a"/>
<!-- outlook -->
<path d="M458.800 705.400 L467.500 699.700 L476.300 705.400 V715 a2 2 0 0 1 -2 2 H460.800 a2 2 0 0 1 -2 -2Z" fill="#2f8fee"/>
<path d="M469.500 701 L476.300 705.400 L476.300 707.600 L469 712 L465.500 706.300Z" fill="#4a54d4"/><path d="M466 706 L471.500 702.300 M468 708.500 L474.500 704.200" stroke="#6a78e6" stroke-width=".8"/>
<path d="M467.500 699.700 L470.500 701.600 L460.500 708 L458.800 705.400Z" fill="#2ba0f2"/>
<path d="M461 717 L476.300 707.600 V715 a2 2 0 0 1 -2 2Z" fill="#3fc6f8"/>
<path d="M458.800 708.500 L468 717 H460.800 a2 2 0 0 1 -2 -2Z" fill="#2aa8f3"/>
<circle cx="462.200" cy="711.500" r="3.700" fill="#1257c8"/><circle cx="462.200" cy="711.500" r="1.700" fill="none" stroke="#fff" stroke-width="1.200"/>
<!-- tray -->
<path d="M1055.400 710.800 l4.800 -4.800 l4.800 4.800" fill="none" stroke="#111" stroke-width="1.200"/>
<g fill="none" stroke="#222" stroke-width="1.050"><path d="M1075.300 712.800 a9 9 0 0 1 9 -9 M1078 712.800 a6.300 6.300 0 0 1 6.300 -6.300 M1080.700 712.800 a3.600 3.600 0 0 1 3.600 -3.600"/></g><circle cx="1083.600" cy="712.200" r=".9" fill="#111"/>
<g fill="none" stroke="#111" stroke-width="1"><path d="M1091.500 706.500 h2 l3 -2.800 v9 l-3 -2.800 h-2z"/><path d="M1098.500 706 a3 3 0 0 1 0 4.400 M1100.500 704.400 a5.300 5.300 0 0 1 0 7.600 M1102.500 703 a7.600 7.600 0 0 1 0 10.400" stroke-width=".9"/></g>
<path d="M1197 702.400 h12.600 v9.800 h-6.500 l-2.500 2.400 v-2.400 h-3.600z" fill="#0a0a0a"/>
<path d="M1199.200 705.200 h8.200 M1199.200 707.500 h8.200 M1199.200 709.800 h5" stroke="#dfeeea" stroke-width=".9"/>
<circle cx="1207.600" cy="711.800" r="2.200" fill="#0a0a0a" stroke="#dfeeea" stroke-width=".8"/>
</svg>
<!--/TASKBAR-->
</div>
</div>
<div id="botbar">
<!--BOTBAR-->
<div class="abs" style="left:15.5px;top:735px;width:8.4px;height:8.4px;border-radius:50%;background:#06c3af"></div>
<div class="abs bt" id="bt1" style="left:28px;top:729.7px;color:#5a5a5a;font-size:14px;letter-spacing:0px;-webkit-text-stroke:.45px #5a5a5a">WebRTC H.264 - 3840x2160 / 1350 kbps / 30 fps dynamic</div>
<div class="abs" style="left:402px;top:732.5px;width:33px;height:15px;border:1.2px solid #6072f0;border-radius:2px;color:#5566ea;font-size:11.8px;line-height:13px;text-align:center" id="p2p">P2P</div>
<div class="abs bt" id="bt2" style="left:1030.5px;top:730.3px;color:#555;font-size:13.6px;letter-spacing:-.3px">Status</div>
<svg class="abs" width="1260" height="32" viewBox="0 724 1260 32" style="left:0;top:724px;overflow:visible" fill="none" stroke="#666" stroke-width="1.4" stroke-linecap="round" stroke-linejoin="round">
<g stroke="#5f73f2" stroke-width="1.5">
<rect x="1081.800" y="732.600" width="14.400" height="10.600" rx="2"/>
<path d="M1089 743.200 v3.500 M1084.800 746.800 h8.400 M1087 738.800 h4.200"/>
<rect x="1117.800" y="736.400" width="14.800" height="10.400" rx="1.800"/>
<path d="M1125.200 736.400 v-1.600 c0 -1.200 .6 -1.600 1.600 -1.800 l3.600 -1.400"/>
<path d="M1121.200 740 h.3 M1124.100 740 h.3 M1127 740 h.3 M1129.600 740 h.3 M1121.200 743.200 h.3 M1129.600 743.200 h.3 M1123.800 743.200 h3.400" stroke-width="1.300"/>
</g>
<rect x="1155" y="732.600" width="12.600" height="15" rx="6.300"/>
<path d="M1155 739.300 h12.600 M1161.300 732.600 v6.700"/>
<path d="M1188.700 737.300 h3 l5 -4.300 v14 l-5 -4.300 h-3z M1200.800 737.500 l5 5 M1205.800 737.500 l-5 5"/>
<path d="M1231 738.500 v-3.500 a2.700 2.700 0 0 1 5.400 0 v4.500 a2.700 2.700 0 0 1 -4.500 2 M1228.700 739.500 a5 5 0 0 0 8.500 3.500 M1238.700 739.500 v.8 M1233.700 744.800 v2.500 M1230.700 747.300 h6 M1227.800 733.200 l11.600 13"/>
</svg>
<div class="abs" style="left:-1px;top:746px;width:11px;height:11px;border-left:1.4px solid #cfcfcf;border-bottom:1.4px solid #cfcfcf;border-bottom-left-radius:11px"></div>
<div class="abs" style="left:1250px;top:746px;width:11px;height:11px;border-right:1.4px solid #cfcfcf;border-bottom:1.4px solid #cfcfcf;border-bottom-right-radius:11px"></div>
<!--/BOTBAR-->
</div>
</body>
</html>
